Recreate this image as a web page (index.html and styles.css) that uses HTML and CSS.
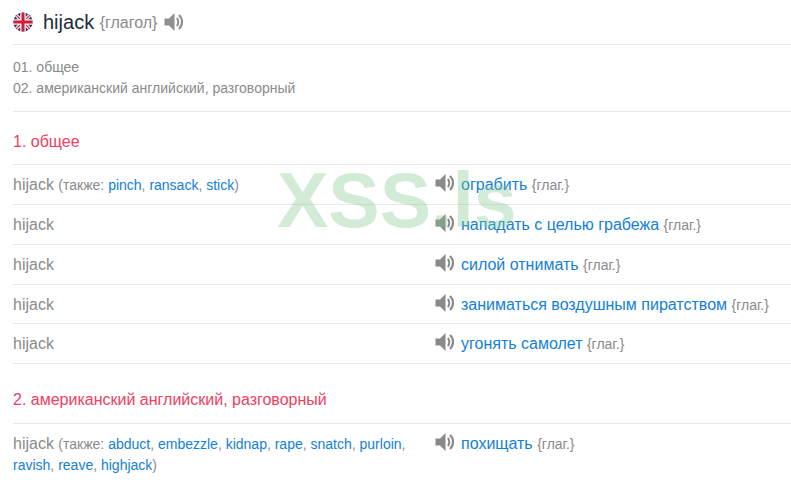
FILE: index.html
```html
<!DOCTYPE html>
<html lang="ru">
<head>
<meta charset="utf-8">
<title>hijack</title>
<link rel="stylesheet" href="styles.css">
</head>
<body>
<svg class="defs" width="0" height="0" aria-hidden="true">
  <symbol id="spk" viewBox="0 0 20 20">
    <path d="M0.5 6.5H5L10.5 1V19L5 13.5H0.5Z" fill="currentColor"/>
    <path d="M12.8 6C14.8 8 14.8 12 12.8 14" fill="none" stroke="currentColor" stroke-width="2"/>
    <path d="M15 3C19 6.8 19 13.2 15 17" fill="none" stroke="currentColor" stroke-width="2.2"/>
  </symbol>
</svg>
<header class="head">
  <svg class="flag" viewBox="0 0 20 20" width="20" height="20">
    <defs><clipPath id="c"><circle cx="10" cy="10" r="9.6"/></clipPath></defs>
    <g clip-path="url(#c)">
      <rect width="20" height="20" fill="#232a63"/>
      <path d="M0 0L20 20M20 0L0 20" stroke="#f0f0f0" stroke-width="3.6"/>
      <path d="M0 0L20 20M20 0L0 20" stroke="#c8203a" stroke-width="1.2"/>
      <path d="M10 0V20M0 10H20" stroke="#f2f2f2" stroke-width="5.6"/>
      <path d="M10 0V20M0 10H20" stroke="#d01c36" stroke-width="3"/>
    </g>
  </svg>
  <h1 class="word">hijack</h1>
  <span class="pos">{глагол}</span>
  <svg class="spk-big"><use href="#spk"/></svg>
</header>
<ol class="toc">
  <li>01. общее</li>
  <li>02. американский английский, разговорный</li>
</ol>
<section class="sec sec-first">
  <h2 class="sec-title">1. общее</h2>
  <div class="row">
    <div class="left">hijack <span class="also">(также: <a>pinch</a>, <a>ransack</a>, <a>stick</a>)</span></div>
    <div class="right"><svg class="spk"><use href="#spk"/></svg><span class="tr"><a>ограбить</a> <span class="tag">{глаг.}</span></span></div>
  </div>
  <div class="row">
    <div class="left">hijack</div>
    <div class="right"><svg class="spk"><use href="#spk"/></svg><span class="tr"><a>нападать с целью грабежа</a> <span class="tag">{глаг.}</span></span></div>
  </div>
  <div class="row">
    <div class="left">hijack</div>
    <div class="right"><svg class="spk"><use href="#spk"/></svg><span class="tr"><a>силой отнимать</a> <span class="tag">{глаг.}</span></span></div>
  </div>
  <div class="row">
    <div class="left">hijack</div>
    <div class="right"><svg class="spk"><use href="#spk"/></svg><span class="tr"><a>заниматься воздушным пиратством</a> <span class="tag">{глаг.}</span></span></div>
  </div>
  <div class="row">
    <div class="left">hijack</div>
    <div class="right"><svg class="spk"><use href="#spk"/></svg><span class="tr"><a>угонять самолет</a> <span class="tag">{глаг.}</span></span></div>
  </div>
</section>
<section class="sec">
  <h2 class="sec-title">2. американский английский, разговорный</h2>
  <div class="row">
    <div class="left">hijack <span class="also">(также: <a>abduct</a>, <a>embezzle</a>, <a>kidnap</a>, <a>rape</a>, <a>snatch</a>, <a>purloin</a>, <a>ravish</a>, <a>reave</a>, <a>highjack</a>)</span></div>
    <div class="right"><svg class="spk"><use href="#spk"/></svg><span class="tr"><a>похищать</a> <span class="tag">{глаг.}</span></span></div>
  </div>
</section>
<div class="mark">XSS.ls</div>
</body>
</html>
```
FILE: styles.css
```css
html, body { margin: 0; padding: 0; background: #fff; height: 483px; overflow: hidden; }
body { position: relative; font-family: "Liberation Sans", Arial, sans-serif; color: #8a8a8a; padding: 0 0 0 13px; box-sizing: border-box; }
.defs { position: absolute; }
a { color: #1280d8; }
.head { display: flex; align-items: center; height: 44px; border-bottom: 1px solid #e8e8e8; }
.flag { margin-right: 10px; flex: none; }
.word { font-size: 20px; font-weight: 400; color: #222b3a; margin: 0 6px 0 0; }
.pos { font-size: 16px; margin-top: 2px; margin-left: -0.5px; }
.spk-big { width: 20px; height: 20px; margin-left: 7px; margin-top: -1px; color: #8f8f8f; }
.toc { list-style: none; margin: 0; padding: 12px 0 12.2px; border-bottom: 1px solid #e8e8e8; font-size: 14px; line-height: 21px; }
.sec-title { font-size: 16px; font-weight: 400; color: #f0405f; margin: 0; height: 52px; line-height: 60px; border-bottom: 1px solid #e8e8e8; }
.row { display: flex; padding: 9px 0 8.8px; border-bottom: 1px solid #e8e8e8; line-height: 21px; }
.sec:last-of-type .row { border-bottom: 0; }
.sec:last-of-type .sec-title { height: 59px; line-height: 72px; }
.left { width: 422px; flex: none; font-size: 16px; }
.also { font-size: 14px; line-height: 1; }
.right { display: flex; align-items: flex-start; font-size: 16px; }
.spk { width: 20px; height: 20px; color: #8a8a8a; margin: -1px 6px 0 0; flex: none; }
.tag { font-size: 14px; line-height: 1; }
.mark { position: absolute; left: 277px; top: 150px; font-size: 77px; font-weight: 700; color: rgba(130, 200, 140, 0.36); line-height: 100px; white-space: nowrap; }
```
